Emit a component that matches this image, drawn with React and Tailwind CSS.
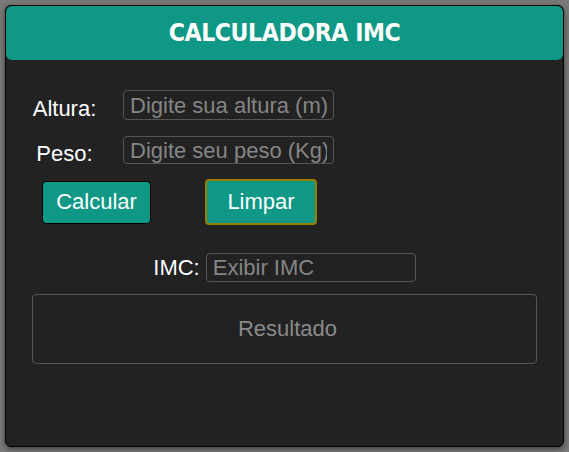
export default function App() {
  return (
    <div className="min-h-[452px] w-full bg-[#7a7a7a] p-[5px]" style={{ fontFamily: '"Liberation Sans", Arial, sans-serif' }}>
      <div className="h-[442px] w-[559px] rounded-md border border-black bg-[#222222] shadow-[0_2px_6px_rgba(0,0,0,0.5)] flex flex-col">
        {/* cabecalho */}
        <div className="h-[54px] rounded-md bg-[#0f9886] flex items-center justify-center">
          <h1 className="text-white text-[24.5px] font-bold tracking-[-0.4px]" style={{ fontFamily: '"DejaVu Sans Condensed", "DejaVu Sans", Verdana, sans-serif' }}>
            CALCULADORA IMC
          </h1>
        </div>

        <div className="flex flex-col pt-[30px] text-[22px]">
          <div className="flex h-[30px] items-center">
            <span className="w-[117px] text-center text-white leading-none pt-[7px]">Altura:</span>
            <input
              className="w-[211px] h-[30px] rounded border border-[#555] bg-transparent px-[6px] text-white placeholder:text-[#858585] outline-none"
              placeholder="Digite sua altura (m)"
            />
          </div>
          <div className="flex h-[28px] items-center mt-[16px]">
            <span className="w-[117px] text-center text-white leading-none pt-[7px]">Peso:</span>
            <input
              className="w-[211px] h-[28px] rounded border border-[#555] bg-transparent px-[6px] text-white placeholder:text-[#858585] outline-none"
              placeholder="Digite seu peso (Kg)"
            />
          </div>

          <div className="flex items-center mt-[15px] h-[46px]">
            <button className="ml-[36px] w-[109px] h-[43px] rounded border border-black bg-[#0f9886] text-white leading-none">
              Calcular
            </button>
            <button className="ml-[54px] w-[112px] h-[46px] rounded-sm border-2 border-[#9a7d00] bg-[#0f9886] text-white leading-none">
              Limpar
            </button>
          </div>

          <div className="flex h-[29px] items-center justify-center mt-[28px] gap-[6px]">
            <span className="text-white leading-none">IMC:</span>
            <input
              className="w-[210px] h-[29px] rounded border border-[#555] bg-transparent px-[6px] text-white placeholder:text-[#858585] outline-none"
              placeholder="Exibir IMC"
            />
          </div>

          <div className="mx-[26px] mt-[12px] h-[70px] rounded border border-[#555] flex items-center justify-center pl-[6px]">
            <span className="text-[#8a8a8a] leading-none">Resultado</span>
          </div>
        </div>
      </div>
    </div>
  );
}
